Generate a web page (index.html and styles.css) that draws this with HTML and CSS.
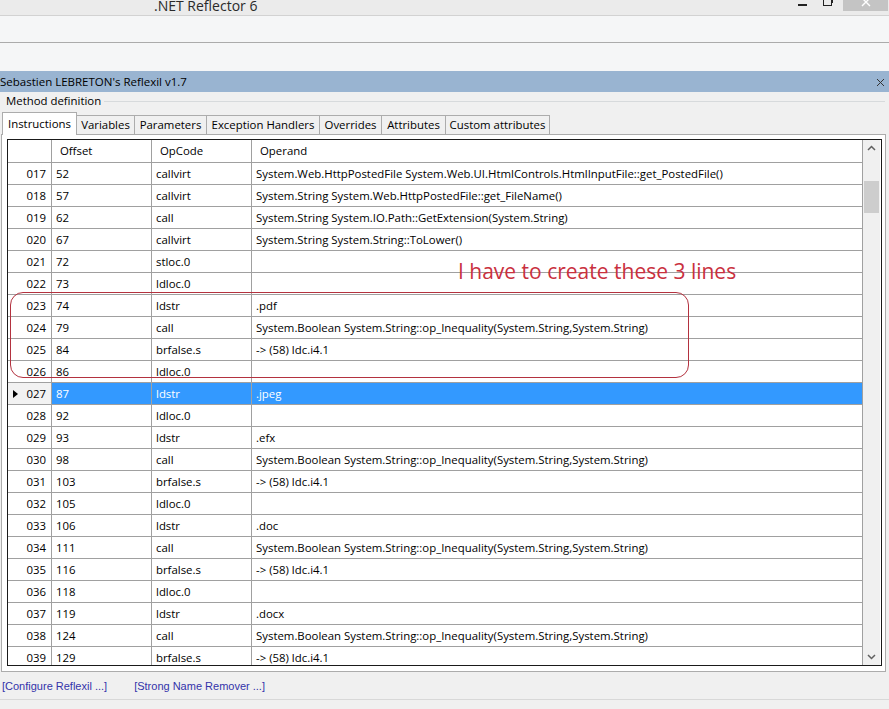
FILE: index.html
```html
<!DOCTYPE html>
<html>
<head>
<meta charset="utf-8">
<link rel="stylesheet" href="styles.css">
</head>
<body>
<div class="window">
  <div class="titlebar">
    <span class="apptitle">.NET Reflector 6</span>
    <div class="winctl">
      <span class="wmin"></span>
      <span class="wrestore"></span>
      <span class="wclose">
        <svg width="10" height="10" viewBox="0 0 10 10"><path d="M1 -2 L9 6 M9 -2 L1 6" stroke="#fff" stroke-width="1.4"/></svg>
      </span>
    </div>
  </div>
  <div class="bar bar1"></div>
  <div class="bar bar2"></div>
  <div class="paneltitle">
    <span>Sebastien LEBRETON's Reflexil v1.7</span>
    <svg class="pclose" width="9" height="9" viewBox="0 0 9 9"><path d="M1 1 L8 8 M8 1 L1 8" stroke="#333" stroke-width="1"/></svg>
  </div>
  <div class="group">
    <span class="glabel">Method definition</span>
    <span class="gline"></span>
  </div>
  <div class="tabs">
    <span class="tab sel">Instructions</span>
    <span class="tab t-var">Variables</span>
    <span class="tab t-par">Parameters</span>
    <span class="tab t-exc">Exception Handlers</span>
    <span class="tab t-ovr">Overrides</span>
    <span class="tab t-att">Attributes</span>
    <span class="tab t-cus">Custom attributes</span>
  </div>
  <div class="tabpage">
    <div class="grid">
      <div class="gridbody">
        <div class="row head"><div class="c rh"></div><div class="c">Offset</div><div class="c">OpCode</div><div class="c">Operand</div></div>
        <div class="row"><div class="c rh">017</div><div class="c">52</div><div class="c">callvirt</div><div class="c">System.Web.HttpPostedFile System.Web.UI.HtmlControls.HtmlInputFile::get_PostedFile()</div></div>
        <div class="row"><div class="c rh">018</div><div class="c">57</div><div class="c">callvirt</div><div class="c">System.String System.Web.HttpPostedFile::get_FileName()</div></div>
        <div class="row"><div class="c rh">019</div><div class="c">62</div><div class="c">call</div><div class="c">System.String System.IO.Path::GetExtension(System.String)</div></div>
        <div class="row"><div class="c rh">020</div><div class="c">67</div><div class="c">callvirt</div><div class="c">System.String System.String::ToLower()</div></div>
        <div class="row"><div class="c rh">021</div><div class="c">72</div><div class="c">stloc.0</div><div class="c"></div></div>
        <div class="row"><div class="c rh">022</div><div class="c">73</div><div class="c">ldloc.0</div><div class="c"></div></div>
        <div class="row"><div class="c rh">023</div><div class="c">74</div><div class="c">ldstr</div><div class="c">.pdf</div></div>
        <div class="row"><div class="c rh">024</div><div class="c">79</div><div class="c">call</div><div class="c">System.Boolean System.String::op_Inequality(System.String,System.String)</div></div>
        <div class="row"><div class="c rh">025</div><div class="c">84</div><div class="c">brfalse.s</div><div class="c">-&gt; (58) ldc.i4.1</div></div>
        <div class="row"><div class="c rh">026</div><div class="c">86</div><div class="c">ldloc.0</div><div class="c"></div></div>
        <div class="row selected"><div class="c rh"><span class="ptr"></span>027</div><div class="c">87</div><div class="c">ldstr</div><div class="c">.jpeg</div></div>
        <div class="row"><div class="c rh">028</div><div class="c">92</div><div class="c">ldloc.0</div><div class="c"></div></div>
        <div class="row"><div class="c rh">029</div><div class="c">93</div><div class="c">ldstr</div><div class="c">.efx</div></div>
        <div class="row"><div class="c rh">030</div><div class="c">98</div><div class="c">call</div><div class="c">System.Boolean System.String::op_Inequality(System.String,System.String)</div></div>
        <div class="row"><div class="c rh">031</div><div class="c">103</div><div class="c">brfalse.s</div><div class="c">-&gt; (58) ldc.i4.1</div></div>
        <div class="row"><div class="c rh">032</div><div class="c">105</div><div class="c">ldloc.0</div><div class="c"></div></div>
        <div class="row"><div class="c rh">033</div><div class="c">106</div><div class="c">ldstr</div><div class="c">.doc</div></div>
        <div class="row"><div class="c rh">034</div><div class="c">111</div><div class="c">call</div><div class="c">System.Boolean System.String::op_Inequality(System.String,System.String)</div></div>
        <div class="row"><div class="c rh">035</div><div class="c">116</div><div class="c">brfalse.s</div><div class="c">-&gt; (58) ldc.i4.1</div></div>
        <div class="row"><div class="c rh">036</div><div class="c">118</div><div class="c">ldloc.0</div><div class="c"></div></div>
        <div class="row"><div class="c rh">037</div><div class="c">119</div><div class="c">ldstr</div><div class="c">.docx</div></div>
        <div class="row"><div class="c rh">038</div><div class="c">124</div><div class="c">call</div><div class="c">System.Boolean System.String::op_Inequality(System.String,System.String)</div></div>
        <div class="row"><div class="c rh">039</div><div class="c">129</div><div class="c">brfalse.s</div><div class="c">-&gt; (58) ldc.i4.1</div></div>
      </div>
      <div class="scrollbar">
        <svg class="arrow" width="17" height="17" viewBox="0 0 17 17"><path d="M5 10 L8.5 6.5 L12 10" fill="none" stroke="#606060" stroke-width="1.5"/></svg>
        <div class="thumb"></div>
        <div class="track"></div>
        <svg class="arrow" width="17" height="17" viewBox="0 0 17 17"><path d="M5 7 L8.5 10.5 L12 7" fill="none" stroke="#606060" stroke-width="1.5"/></svg>
      </div>
    </div>
  </div>
  <div class="links">
    <span class="link">[Configure Reflexil ...]</span>
    <span class="link">[Strong Name Remover ...]</span>
  </div>
  <div class="statusbar"></div>
  <div class="note">I have to create these 3 lines</div>
  <div class="notebox"></div>
</div>
</body>
</html>
```

FILE: styles.css
```css
html, body {
  margin: 0;
  padding: 0;
}
body {
  width: 889px;
  height: 709px;
  overflow: hidden;
  background: #f0f0f0;
  font-family: "Open Sans", "Noto Sans", sans-serif;
  font-size: 11.4px;
  color: #000;
}
.window {
  position: relative;
  width: 889px;
  height: 709px;
}
.titlebar {
  height: 15px;
  background: #ebebeb;
  border-bottom: 1px solid #d2d2d2;
  display: flex;
  overflow: hidden;
}
.apptitle {
  margin-left: 154px;
  margin-top: -4px;
  font-size: 14px;
  line-height: 19px;
  color: #2a2a2a;
}
.winctl {
  margin-left: auto;
  display: flex;
  align-items: flex-start;
}
.wmin {
  width: 9px;
  height: 2px;
  background: #222;
  margin-top: 4px;
  margin-right: 16px;
}
.wrestore {
  width: 7px;
  height: 6px;
  border: 1px solid #222;
  border-top: none;
  margin-top: -1px;
  margin-right: 11px;
  box-shadow: 2px -2px 0 -1px #222;
}
.wclose {
  width: 45px;
  height: 11px;
  background: #c4c4c4;
  display: flex;
  justify-content: center;
  align-items: flex-start;
  margin-right: 1px;
}
.bar {
  background: #f5f6f7;
}
.bar1 {
  height: 26px;
  border-bottom: 1px solid #ababab;
}
.bar2 {
  height: 28px;
}
.paneltitle {
  height: 21px;
  background: #99b4d1;
  display: flex;
  align-items: center;
  justify-content: space-between;
  font-size: 11.5px;
  padding-right: 4px;
}
.pclose {
  margin-top: 1px;
}
.group {
  height: 20px;
  display: flex;
  align-items: center;
}
.glabel {
  margin-left: 6px;
  margin-top: -3px;
}
.gline {
  flex: 1;
  height: 1px;
  background: #d7dadc;
  margin-left: 3px;
  margin-right: 4px;
  margin-top: -1px;
}
.tabs {
  height: 22px;
  display: flex;
  align-items: flex-end;
  padding-left: 2px;
}
.tab {
  box-sizing: border-box;
  height: 19px;
  border: 1px solid #acacac;
  border-bottom: none;
  border-left: none;
  background: #f0f0f0;
  text-align: center;
  line-height: 18px;
  white-space: nowrap;
}
.tab.sel {
  position: relative;
  z-index: 1;
  height: 23px;
  width: 75px;
  margin-bottom: -1px;
  background: #fff;
  border-left: 1px solid #acacac;
  line-height: 21px;
}
.t-var { width: 58px; }
.t-par { width: 72px; }
.t-exc { width: 113px; }
.t-ovr { width: 62px; }
.t-att { width: 64px; }
.t-cus { width: 104px; }
.tabpage {
  margin-left: 1px;
  width: 885px;
  box-sizing: border-box;
  border: 1px solid #acacac;
  background: #fff;
  padding: 4px 3px 5px 5px;
}
.grid {
  height: 527px;
  box-sizing: border-box;
  border: 1px solid #1a1a1a;
  display: flex;
  background: #fff;
}
.gridbody {
  width: 855px;
  overflow: hidden;
}
.row {
  display: grid;
  grid-template-columns: 44px 100px 100px 611px;
  height: 22px;
}
.row.head {
  height: 23px;
}
.c {
  box-sizing: border-box;
  border-right: 1px solid #a0a0a0;
  border-bottom: 1px solid #a0a0a0;
  padding-left: 4px;
  line-height: 21px;
  white-space: nowrap;
  overflow: hidden;
}
.row.head .c {
  padding-left: 8px;
  line-height: 22px;
}
.c.rh {
  text-align: right;
  padding-left: 0;
  padding-right: 5px;
  display: flex;
  justify-content: flex-end;
  align-items: center;
}
.row.selected .c {
  background: #3399ff;
  color: #fff;
}
.row.selected .c.rh {
  background: #f2f2f2;
  color: #000;
  justify-content: space-between;
  padding-left: 5px;
}
.ptr {
  width: 0;
  height: 0;
  border-left: 5px solid #000;
  border-top: 4px solid transparent;
  border-bottom: 4px solid transparent;
}
.scrollbar {
  width: 17px;
  background: #f0f0f0;
  display: flex;
  flex-direction: column;
}
.arrow {
  display: block;
}
.thumb {
  margin: 24px 1px 0 1px;
  height: 32px;
  background: #cdcdcd;
}
.track {
  flex: 1;
}
.links {
  height: 27px;
  display: flex;
  align-items: center;
  font-family: "Liberation Sans", Arial, sans-serif;
  font-size: 11px;
  padding-left: 2px;
  border-bottom: 1px solid #d8d8d8;
}
.link {
  color: #3333aa;
  margin-right: 27px;
}
.statusbar {
  height: 9px;
}
.note {
  position: absolute;
  left: 458px;
  top: 257px;
  font-size: 21px;
  line-height: 28px;
  color: #c9303e;
}
.notebox {
  position: absolute;
  left: 10px;
  top: 292px;
  width: 677px;
  height: 84px;
  border: 1px solid #b3323f;
  border-radius: 13px;
}
```
